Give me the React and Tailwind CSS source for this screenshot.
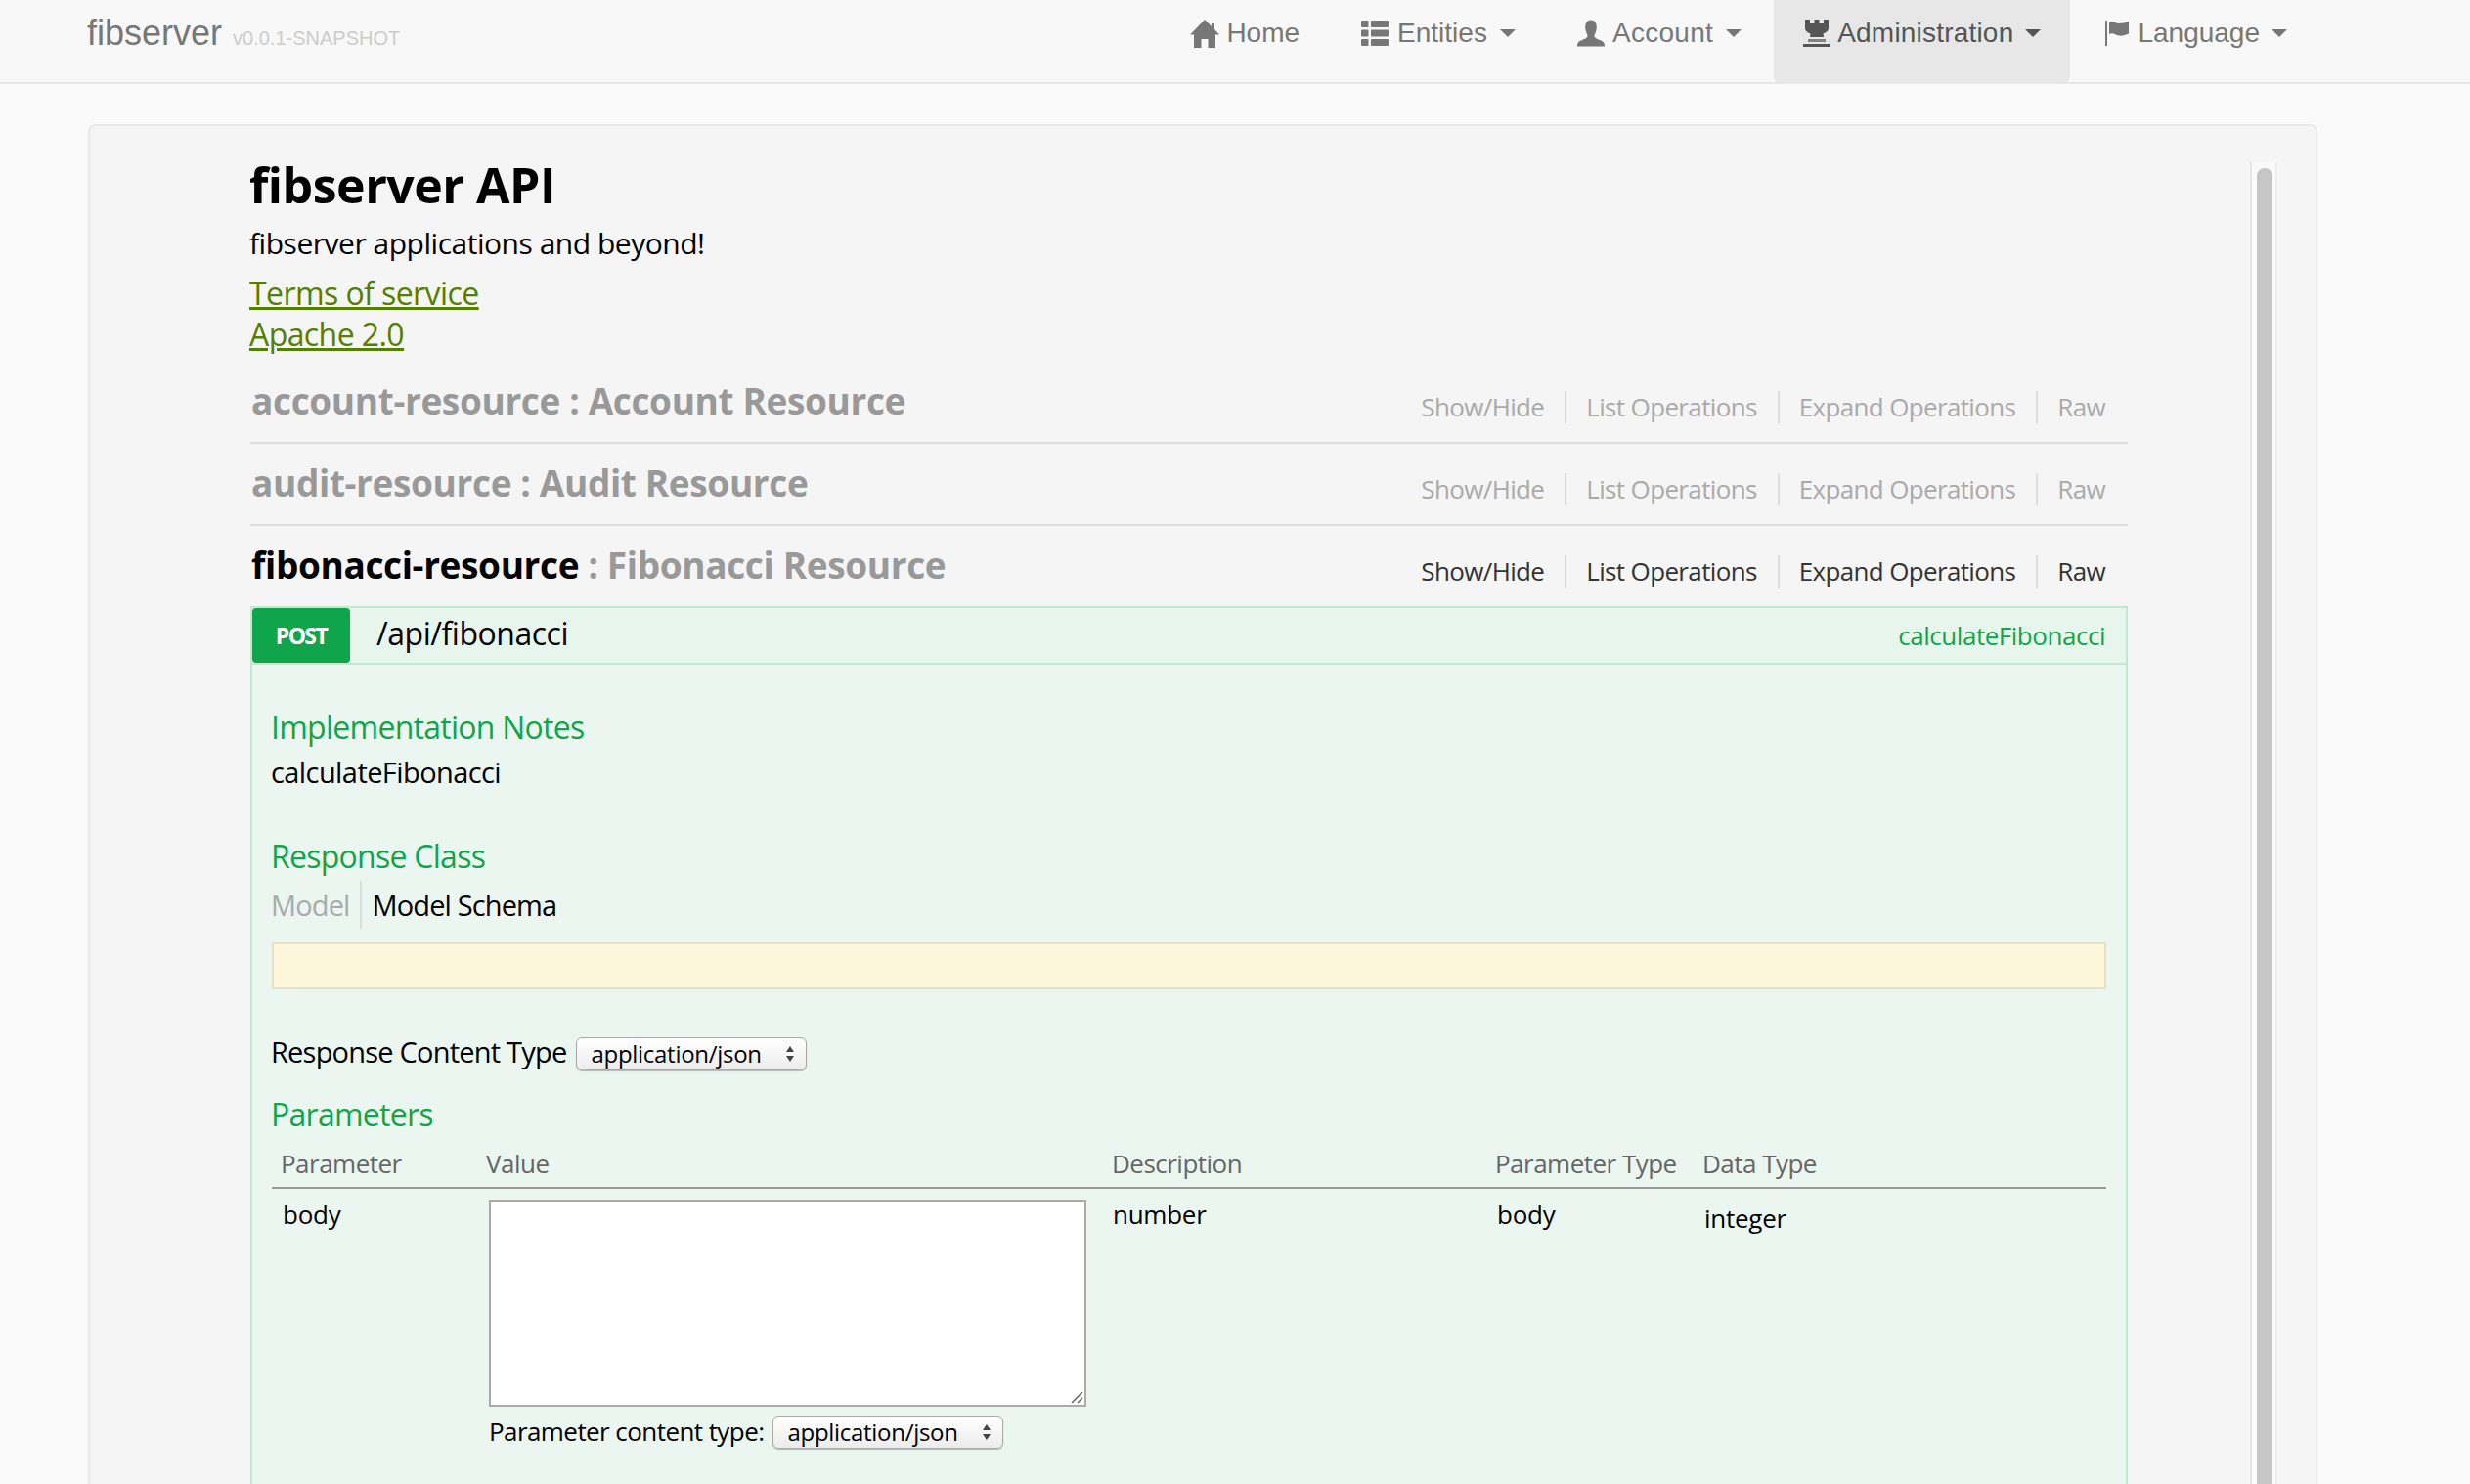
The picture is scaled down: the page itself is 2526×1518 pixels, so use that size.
import React from "react";

const HomeIcon = () => (
  <svg width="30" height="29" viewBox="0 0 30 29" className="shrink-0" fill="currentColor">
    <path d="M15 0 L22 7 V4 H25 V10 L30 15.5 H26 V29 H18.5 V20 H11.5 V29 H4 V15.5 H0 Z" />
  </svg>
);
const ListIcon = () => (
  <svg width="28" height="26" viewBox="0 0 28 26" className="shrink-0" fill="currentColor">
    <rect x="0" y="0" width="7.5" height="7" rx="1" /><rect x="10" y="0" width="18" height="7" rx="1" />
    <rect x="0" y="9.5" width="7.5" height="7" rx="1" /><rect x="10" y="9.5" width="18" height="7" rx="1" />
    <rect x="0" y="19" width="7.5" height="7" rx="1" /><rect x="10" y="19" width="18" height="7" rx="1" />
  </svg>
);
const UserIcon = () => (
  <svg width="28" height="28" viewBox="0 0 29 28" className="shrink-0" fill="currentColor">
    <path d="M14.5 0 C19 0 20.5 4 20.5 8 C20.5 12 18.5 14.5 18 16.5 C18 19 21 20 24.5 21.5 C27.5 22.8 29 24 29 28 H0 C0 24 1.5 22.8 4.5 21.5 C8 20 11 19 11 16.5 C10.5 14.5 8.5 12 8.5 8 C8.5 4 10 0 14.5 0 Z" />
  </svg>
);
const TowerIcon = () => (
  <svg width="28" height="28" viewBox="0 0 28 28" className="shrink-0" fill="currentColor">
    <path d="M2 0 H7 V4 H11.5 V0 H16.5 V4 H21 V0 H26 V9 C26 12 23 13.5 20.5 14.5 L21 18 H7 L7.5 14.5 C5 13.5 2 12 2 9 Z" />
    <rect x="5" y="20" width="18" height="3" opacity="0.7" /><rect x="0" y="25" width="28" height="3" />
  </svg>
);
const FlagIcon = () => (
  <svg width="24" height="26" viewBox="0 0 24 26" className="shrink-0" fill="currentColor">
    <rect x="0" y="0" width="2" height="26" />
    <path d="M4 2 C8 0 10 3 14 3 C18 3 20 2 24 1 V13.5 C20 15 18 16 14 15.5 C10 15 8 12 4 14 Z" />
  </svg>
);

const NavItem = ({ icon, label, caret, active, pl, gap, track, caretMl }) => (
  <div
    className={`h-[86px] flex items-start pt-[14px] pr-[30px] rounded-b-[8px] ${pl} ${active ? "bg-[#e7e7e7] text-[#555]" : "text-[#777]"}`}
  >
    <span className="flex items-center h-[40px]">
      {icon}
      <span className={`${gap} ${track} text-[28px] leading-[40px]`}>{label}</span>
      {caret && (
        <span className={`${caretMl} inline-block w-0 h-0 border-x-[8px] border-x-transparent border-t-[8px] border-t-current`} />
      )}
    </span>
  </div>
);

const Action = ({ children, first, last, dark }) => (
  <span
    className={`text-[26px] tracking-[-0.025em] leading-[33px] h-[33px] ${first ? "pr-[21px]" : "pl-[20px] border-l-2 border-[#ddd]"} ${!first && !last ? "pr-[21px]" : ""} ${dark ? "text-[#333]" : "text-[#aaa]"}`}
  >
    {children}
  </span>
);

const Resource = ({ name, title, open }) => (
  <div className={`flex items-start justify-between ${open ? "h-[82px]" : "h-[84px] border-b-2 border-[#ddd]"}`}>
    <h2 className="text-[37px] tracking-[-0.01em] leading-[50px] font-bold text-[#999] pl-[1px] pt-[15px] box-content">
      <span className={open ? "text-black" : ""}>{name}</span> : {title}
    </h2>
    <div className="flex items-start pt-[30px] pr-[23px]">
      <Action first dark={open}>Show/Hide</Action>
      <Action dark={open}>List Operations</Action>
      <Action dark={open}>Expand Operations</Action>
      <Action last dark={open}>Raw</Action>
    </div>
  </div>
);

const SelectBox = ({ w }) => (
  <span className={`${w} h-[34px] flex items-center justify-between pl-[14px] pr-[12px] rounded-[6px] border border-[#a9a9a9] bg-gradient-to-b from-white to-[#ececec] shadow-[0_1px_1px_rgba(0,0,0,0.25)] text-[24px] tracking-[-0.012em] leading-[32px] text-black`}>
    application/json
    <svg width="8" height="20" viewBox="0 0 8 20" fill="#444"><path d="M4 2 L8 8 H0 Z" /><path d="M4 18 L8 12 H0 Z" /></svg>
  </span>
);

const SectionTitle = ({ children, cls }) => (
  <h4 className={`text-[32px] tracking-[-0.023em] leading-[40px] text-[#10a54a] font-normal ${cls}`}>{children}</h4>
);

export default function App() {
  return (
    <div className="w-[2526px] h-[1518px] overflow-hidden bg-[#fafafa] font-['Open_Sans','Noto_Sans',sans-serif] text-black">
      <nav className="h-[86px] bg-[#f8f8f8] border-b-2 border-[#e7e7e7] flex justify-between pl-[89px] pr-[157px] font-['Liberation_Sans',Arial,sans-serif]">
        <div className="flex items-baseline pt-[14px] h-[60px]">
          <span className="text-[36px] leading-[40px] text-[#777]">fibserver</span>
          <span className="ml-[11px] text-[20px] leading-[24px] text-[#ccc]">v0.0.1-SNAPSHOT</span>
        </div>
        <div className="flex items-start">
          <NavItem icon={<HomeIcon />} label="Home" pl="pl-[30px]" gap="ml-[7px]" />
          <NavItem icon={<ListIcon />} label="Entities" caret pl="pl-[33px]" gap="ml-[9px]" caretMl="ml-[13px]" />
          <NavItem icon={<UserIcon />} label="Account" caret pl="pl-[33px]" gap="ml-[8px]" track="tracking-[0.3px]" caretMl="ml-[13px]" />
          <NavItem icon={<TowerIcon />} label="Administration" caret active pl="ml-[3px] pl-[30px]" gap="ml-[7px]" track="tracking-[0.2px]" caretMl="ml-[12px]" />
          <NavItem icon={<FlagIcon />} label="Language" caret pl="pl-[36px]" gap="ml-[9px]" caretMl="ml-[12px]" />
        </div>
      </nav>

      <div className="ml-[90px] mt-[41px] w-[2280px] h-[1500px] bg-[#f5f5f5] border-2 border-[#e9e9e9] rounded-[8px] flex">
        <main className="ml-[164px] w-[1920px]">
          <h1 className="mt-[25px] -ml-[1px] text-[50px] tracking-[-0.01em] leading-[70px] font-bold">fibserver API</h1>
          <p className="mt-[4px] -ml-[1px] text-[30px] tracking-[-0.016em] leading-[42px]">fibserver applications and beyond!</p>
          <a className="block mt-[9px] -ml-[1px] text-[32px] tracking-[-0.018em] leading-[42px] text-[#547f00] underline">Terms of service</a>
          <a className="block -ml-[1px] text-[32px] tracking-[-0.018em] leading-[42px] text-[#547f00] underline">Apache 2.0</a>

          <div className="mt-[7px]">
            <Resource name="account-resource" title="Account Resource" />
            <Resource name="audit-resource" title="Audit Resource" />
            <Resource name="fibonacci-resource" title="Fibonacci Resource" open />
          </div>

          <section className="border-2 border-[#c3e8d1] bg-[#ebf6f0] h-[900px]">
            <div className="h-[58px] bg-[#e7f6ec] border-b-2 border-[#c3e8d1] flex items-start justify-between">
              <div className="flex items-start">
                <span className="w-[100px] h-[56px] bg-[#10a54a] rounded-[4px] text-white text-[23px] tracking-[-0.07em] leading-[56px] font-bold text-center">POST</span>
                <span className="ml-[27px] text-[32px] tracking-[-0.015em] leading-[46px] mt-[3px]">/api/fibonacci</span>
              </div>
              <span className="mr-[21px] mt-[8px] text-[26px] tracking-[-0.018em] leading-[40px] text-[#10a54a]">calculateFibonacci</span>
            </div>
            <div className="px-[19px]">
              <SectionTitle cls="mt-[44px]">Implementation Notes</SectionTitle>
              <p className="mt-[6px] text-[29px] tracking-[-0.02em] leading-[40px]">calculateFibonacci</p>
              <SectionTitle cls="mt-[46px]">Response Class</SectionTitle>
              <div className="mt-[5px] flex items-center h-[49px]">
                <span className="text-[29px] tracking-[-0.03em] text-[#aaa] pr-[10px] leading-[49px] border-r-2 border-[#ddd]">Model</span>
                <span className="text-[29px] tracking-[-0.03em] leading-[49px] pl-[11px]">Model Schema</span>
              </div>
              <div className="mt-[14px] mx-[1px] h-[48px] bg-[#fcf6db] border-2 border-[#e5e0c6]" />
              <div className="mt-[49px] flex items-center h-[34px]">
                <span className="text-[29px] tracking-[-0.027em] leading-[34px] mr-[10px] mb-[4px]">Response Content Type</span>
                <SelectBox w="w-[236px]" />
              </div>
              <SectionTitle cls="mt-[25px]">Parameters</SectionTitle>
              <div className="mt-[10px] mx-[1px] grid grid-cols-[219px_640px_392px_212px_1fr] border-b-2 border-[#999] h-[46px] text-[26px] tracking-[-0.02em] leading-[40px] text-[#666]">
                <span className="pl-[9px]">Parameter</span>
                <span>Value</span>
                <span>Description</span>
                <span>Parameter Type</span>
                <span>Data Type</span>
              </div>
              <div className="mx-[1px] grid grid-cols-[222px_638px_393px_212px_1fr] pt-[12px] text-[26px] tracking-[-0.01em] leading-[36px]">
                <span className="pl-[11px] -mt-[4px]">body</span>
                <div>
                  <div className="relative w-[611px] h-[211px] bg-white border-2 border-[#aaa]">
                    <svg className="absolute right-[1px] bottom-[1px]" width="14" height="14" viewBox="0 0 14 14" stroke="#666" strokeWidth="1.5"><path d="M2 13 L13 2 M8 13 L13 8" /></svg>
                  </div>
                  <div className="mt-[9px] flex items-center h-[34px]">
                    <span className="mr-[9px] text-[26px] tracking-[-0.022em] leading-[34px] mb-[3px]">Parameter content type:</span>
                    <SelectBox w="w-[236px]" />
                  </div>
                </div>
                <span className="-mt-[4px]">number</span>
                <span className="-mt-[4px]">body</span>
                <span>integer</span>
              </div>
            </div>
          </section>
        </main>
        <div className="ml-[125px] mt-[37px] w-[28px] h-[1500px] bg-[#fafafa] border-x-2 border-l-[#e5e5e5] border-r-[#eee] pl-[5px] pt-[6px]">
          <div className="w-[16px] h-[1500px] bg-[#c6c6c6] rounded-t-[8px]" />
        </div>
      </div>
    </div>
  );
}
